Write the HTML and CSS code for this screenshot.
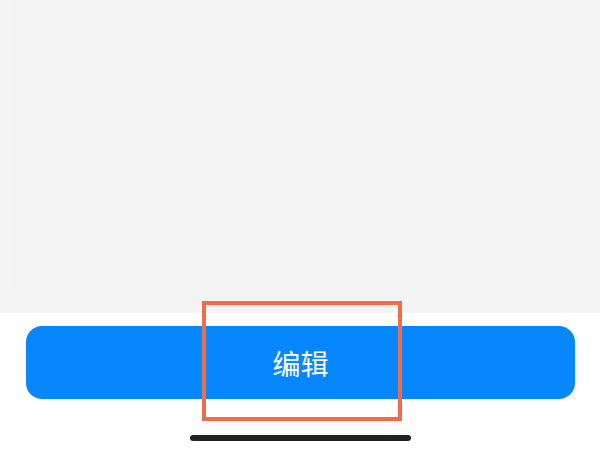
FILE: index.html
```html
<!DOCTYPE html>
<html lang="zh">
<head>
<meta charset="utf-8">
<link rel="stylesheet" href="styles.css">
</head>
<body>
<div class="screen">
  <div class="content">
    <div class="panel"></div>
  </div>
  <div class="footer">
    <button class="edit-btn">编辑</button>
  </div>
  <div class="home-bar"></div>
  <div class="highlight"></div>
</div>
</body>
</html>
```
FILE: styles.css
```css
* { box-sizing: border-box; }
html, body { margin: 0; padding: 0; background: #ffffff; }
.screen {
  position: relative;
  width: 600px;
  height: 450px;
  overflow: hidden;
  font-family: "Noto Sans CJK SC", "Noto Sans", sans-serif;
}
.content {
  height: 313px;
  background: #f4f4f4;
}
.panel {
  height: 288px;
  margin-left: 12px;
  border-left: 3px solid #f1f1f1;
}
.footer {
  padding: 13px 25px 0 26px;
}
.edit-btn {
  display: flex;
  align-items: center;
  justify-content: center;
  width: 100%;
  height: 73px;
  border: none;
  border-radius: 16px;
  background: #0787fd;
  color: #ffffff;
  font-family: "Noto Sans CJK SC", "Noto Sans", sans-serif;
  font-size: 28px;
  padding: 0;
}
.home-bar {
  width: 221px;
  height: 6px;
  margin: 36px 0 0 190px;
  background: #222222;
  border-radius: 3px;
}
.highlight {
  position: absolute;
  left: 202px;
  top: 301px;
  width: 200px;
  height: 120px;
  border: 4px solid #f26d45;
}
```
